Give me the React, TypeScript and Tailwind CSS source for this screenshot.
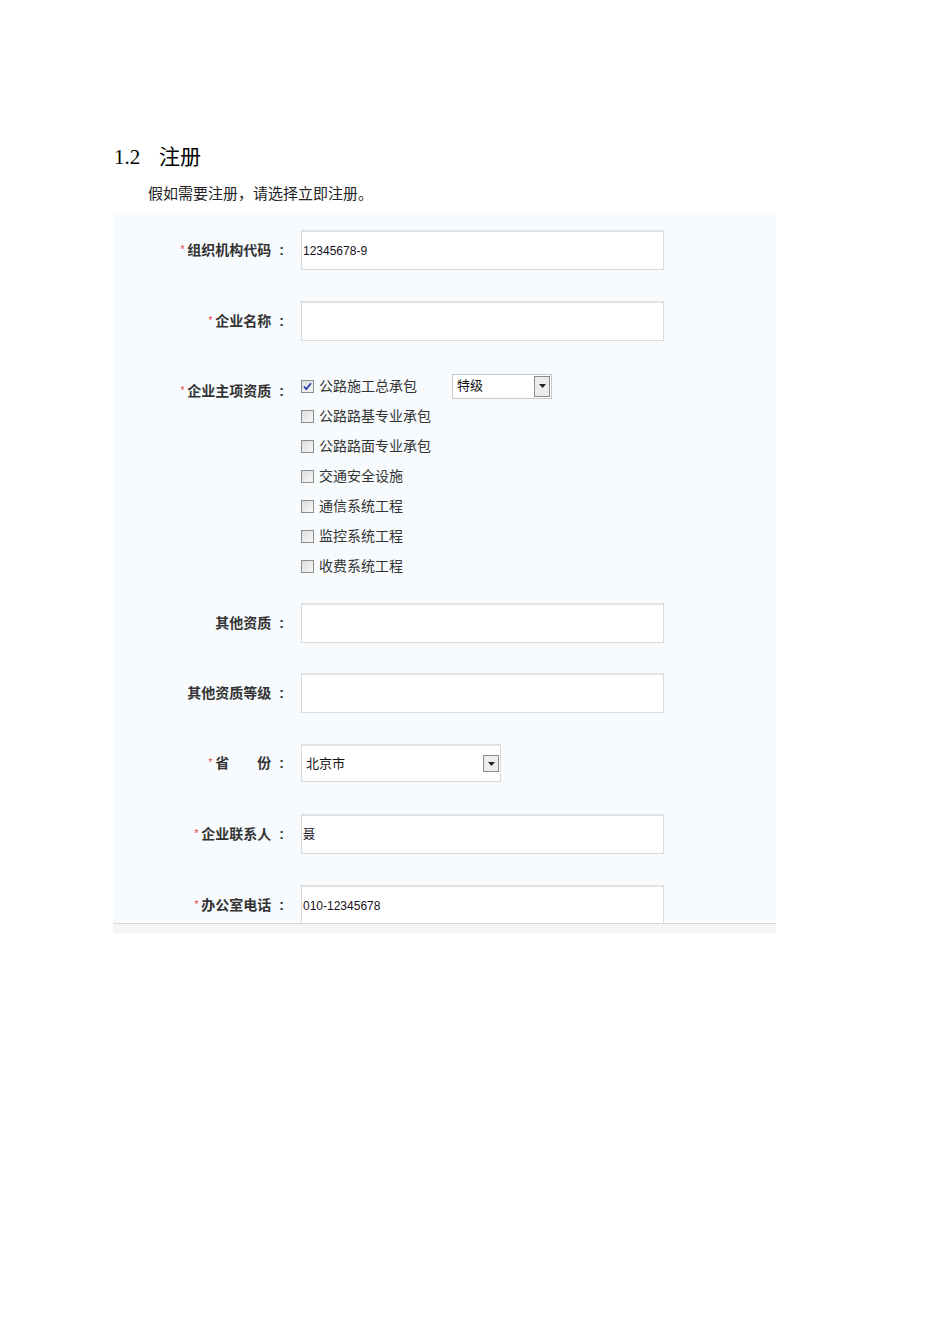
import React from "react";

const LABEL_FONT = "font-['Liberation_Sans','Noto_Sans_CJK_SC',sans-serif]";

const QUALS = [
  { name: "公路施工总承包", checked: true },
  { name: "公路路基专业承包", checked: false },
  { name: "公路路面专业承包", checked: false },
  { name: "交通安全设施", checked: false },
  { name: "通信系统工程", checked: false },
  { name: "监控系统工程", checked: false },
  { name: "收费系统工程", checked: false },
];

function Label({ text, required }: { text: string; required?: boolean }) {
  return (
    <div className="flex w-[188px] shrink-0 items-center justify-end pr-[17px]">
      {required && <span className="mr-[3px] text-[10px] leading-none text-[#e4393c]">*</span>}
      <span className="text-[14px] font-bold text-[#333]">{text}</span>
      <span className="ml-[8px] text-[14px] font-bold text-[#333]">:</span>
    </div>
  );
}

function Arrow({ size }: { size: "sm" | "md" }) {
  return (
    <span
      className={
        size === "sm"
          ? "flex h-[21px] w-[16px] items-center justify-center border border-[#8c8c8c] bg-[#ececec]"
          : "flex h-[17px] w-[16px] items-center justify-center border border-[#8c8c8c] bg-[#ececec]"
      }
    >
      <svg width="7" height="4" viewBox="0 0 7 4">
        <path d="M0 0h7L3.5 4z" fill="#222" />
      </svg>
    </span>
  );
}

function TextRow({ label, required, value }: { label: string; required?: boolean; value?: string }) {
  return (
    <div className="flex items-center">
      <Label text={label} required={required} />
      <div className="flex h-[40px] w-[363px] items-center border border-[#dadada] border-t-2 border-t-[#e2e2e2] bg-white pl-[1px] text-[12px] text-[#1a0f24] font-['Liberation_Sans','Noto_Sans_CJK_SC',sans-serif]">
        {value}
      </div>
    </div>
  );
}

function Checkbox({ checked }: { checked: boolean }) {
  return (
    <span className="flex h-[13px] w-[13px] items-center justify-center border border-[#8d8d8d] bg-gradient-to-br from-[#dcdcdc] to-[#f8f8f8]">
      {checked && (
        <svg width="9" height="9" viewBox="0 0 9 9">
          <path d="M1 4.5l2.3 2.6L8 1.2" fill="none" stroke="#2a3fa8" strokeWidth="1.8" />
        </svg>
      )}
    </span>
  );
}

export default function App() {
  return (
    <div className={`min-h-[1344px] w-[950px] bg-white ${LABEL_FONT}`}>
      <div className="pl-[113px] pt-[140px]">
        <h2 className="flex items-baseline text-[21px] font-normal text-black">
          <span className="font-['Liberation_Serif',serif] w-[46px] pl-[1px]">1.2</span>
          <span className="font-['Noto_Sans_CJK_SC',sans-serif]">注册</span>
        </h2>
        <p className="mt-[9px] pl-[35px] text-[15px] text-[#222] font-['Liberation_Serif','Noto_Sans_CJK_SC',serif]">
          假如需要注册，请选择立即注册。
        </p>

        <div className="mt-[8px] w-[663px]">
          <div className="h-[710px] overflow-hidden bg-[#f7fbfe] pt-[17px]">
            <div className="flex flex-col">
              <TextRow label="组织机构代码" required value="12345678-9" />
              <div className="mt-[31px]">
                <TextRow label="企业名称" required />
              </div>

              <div className="mt-[30px] flex items-start">
                <div className="flex h-[30px] items-center pt-[10px]">
                  <Label text="企业主项资质" required />
                </div>
                <div className="flex flex-col">
                  {QUALS.map((q, i) => (
                    <div key={q.name} className="flex h-[30px] items-center">
                      <Checkbox checked={q.checked} />
                      <span className="ml-[5px] w-[133px] text-[14px] text-[#333]">{q.name}</span>
                      {i === 0 && (
                        <div className="flex h-[25px] w-[100px] items-center justify-between border border-[#c8c8c8] bg-white pl-[4px] pr-[1px]">
                          <span className="text-[13px] text-[#111]">特级</span>
                          <Arrow size="sm" />
                        </div>
                      )}
                    </div>
                  ))}
                </div>
              </div>

              <div className="mt-[22px]">
                <TextRow label="其他资质" />
              </div>
              <div className="mt-[30px]">
                <TextRow label="其他资质等级" />
              </div>

              <div className="mt-[31px] flex items-center">
                <Label text="省　　份" required />
                <div className="flex h-[38px] w-[200px] items-center justify-between border border-[#dadada] border-t-2 border-t-[#e2e2e2] bg-white pl-[4px] pr-[1px]">
                  <span className="text-[13px] text-[#111]">北京市</span>
                  <Arrow size="md" />
                </div>
              </div>

              <div className="mt-[32px]">
                <TextRow label="企业联系人" required value="聂" />
              </div>
              <div className="mt-[31px]">
                <TextRow label="办公室电话" required value="010-12345678" />
              </div>
            </div>
          </div>
          <div className="h-[10px] border-t border-[#d6d6d6] bg-[#f5f5f5]" />
        </div>
      </div>
    </div>
  );
}
